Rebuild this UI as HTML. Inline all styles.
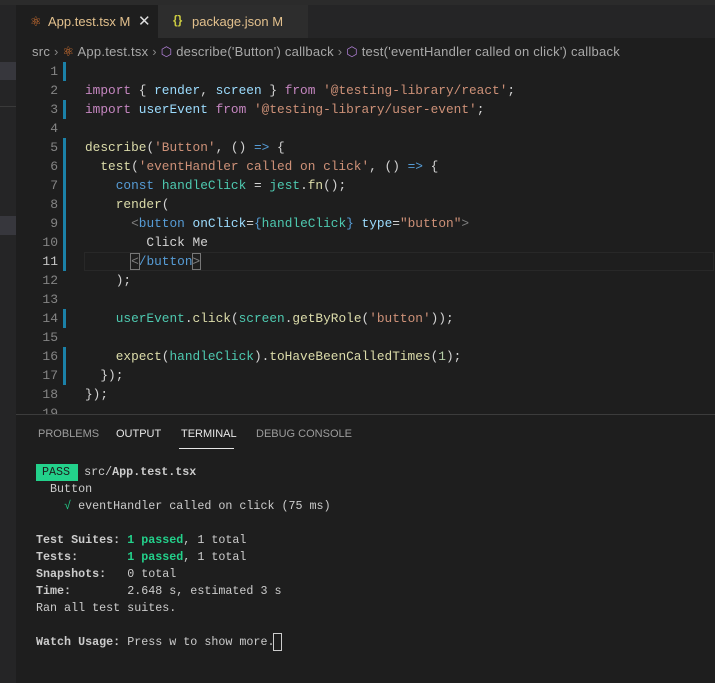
<!DOCTYPE html>
<html><head><style>
*{margin:0;padding:0;box-sizing:border-box}
body{width:715px;height:683px;background:#1e1e1e;overflow:hidden;position:relative;font-family:"Liberation Sans",sans-serif;}
.abs{position:absolute}
.code{font-family:"Liberation Mono",monospace;font-size:12.8px;white-space:pre;color:#d4d4d4;line-height:19px}
.ln{position:absolute;left:16px;width:42px;text-align:right;color:#858585;font-family:"Liberation Mono",monospace;font-size:13px;line-height:19px}
.k{color:#c586c0}.v{color:#9cdcfe}.s{color:#ce9178}.f{color:#dcdcaa}.b{color:#569cd6}.c{color:#4ec9b0}.g{color:#808080}
.term{font-family:"Liberation Mono",monospace;font-size:11.7px;white-space:pre;color:#cccccc;line-height:17px}
.bold{font-weight:bold}
.gr{color:#23d18b;font-weight:bold}
</style></head><body>
<div class="abs" style="left:0;top:0;width:715px;height:5px;background:#2b2b2b"></div>
<div class="abs" style="left:0;top:5px;width:715px;height:33px;background:#252526"></div>
<div class="abs" style="left:0;top:38px;width:16px;height:645px;background:#252526"></div>
<div class="abs" style="left:0;top:62px;width:16px;height:18px;background:#37373d"></div>
<div class="abs" style="left:0;top:216px;width:16px;height:19px;background:#37373d"></div>
<div class="abs" style="left:0;top:106px;width:16px;height:1px;background:#3a3a3a"></div>
<div class="abs" style="left:16px;top:5px;width:142px;height:33px;background:#1e1e1e"></div>
<div class="abs" style="left:158px;top:5px;width:150px;height:33px;background:#2d2d2d"></div>
<div class="abs" style="left:30px;top:14px;font-size:13px;color:#e37933">⚛</div>
<div class="abs" style="left:48px;top:14px;font-size:13px;color:#e2c08d">App.test.tsx <span style="color:#e2c08d">M</span></div>
<div class="abs" style="left:138px;top:12px;font-size:15px;color:#ddd">✕</div>
<div class="abs" style="left:173px;top:13px;font-size:12px;color:#cbcb41;font-weight:bold">{}</div>
<div class="abs" style="left:192px;top:14px;font-size:13px;color:#e2c08d">package.json <span>M</span></div>
<div class="abs" style="left:32px;top:44px;font-size:13px;letter-spacing:0.25px;color:#a9a9a9;white-space:pre">src <span style="color:#888">›</span> <span style="color:#e37933">⚛</span> App.test.tsx <span style="color:#888">›</span> <span style="color:#b180d7">⬡</span> describe('Button') callback <span style="color:#888">›</span> <span style="color:#b180d7">⬡</span> test('eventHandler called on click') callback</div>
<div class="abs" style="left:63px;top:62px;width:3px;height:19px;background:#1b81a8"></div>
<div class="abs" style="left:63px;top:100px;width:3px;height:19px;background:#1b81a8"></div>
<div class="abs" style="left:63px;top:138px;width:3px;height:133px;background:#1b81a8"></div>
<div class="abs" style="left:63px;top:309px;width:3px;height:19px;background:#1b81a8"></div>
<div class="abs" style="left:63px;top:347px;width:3px;height:38px;background:#1b81a8"></div>
<div class="abs" style="left:84px;top:252px;width:630px;height:19px;border:1px solid #282828"></div>
<div class="ln" style="top:62px">1<br>2<br>3<br>4<br>5<br>6<br>7<br>8<br>9<br>10<br><span style="color:#c6c6c6">11</span><br>12<br>13<br>14<br>15<br>16<br>17<br>18<br>19</div>
<div class="abs code" style="left:85px;top:62px">
<span class="k">import</span> { <span class="v">render</span>, <span class="v">screen</span> } <span class="k">from</span> <span class="s">'@testing-library/react'</span>;
<span class="k">import</span> <span class="v">userEvent</span> <span class="k">from</span> <span class="s">'@testing-library/user-event'</span>;

<span class="f">describe</span>(<span class="s">'Button'</span>, () <span class="b">=&gt;</span> {
  <span class="f">test</span>(<span class="s">'eventHandler called on click'</span>, () <span class="b">=&gt;</span> {
    <span class="b">const</span> <span class="c">handleClick</span> = <span class="c">jest</span>.<span class="f">fn</span>();
    <span class="f">render</span>(
      <span class="g">&lt;</span><span class="b">button</span> <span class="v">onClick</span>=<span class="b">{</span><span class="c">handleClick</span><span class="b">}</span> <span class="v">type</span>=<span class="s">"button"</span><span class="g">&gt;</span>
        Click Me
      <span class="g" style="outline:1px solid #777">&lt;</span><span class="b">/button</span><span class="g" style="outline:1px solid #777">&gt;</span>
    );

    <span class="c">userEvent</span>.<span class="f">click</span>(<span class="c">screen</span>.<span class="f">getByRole</span>(<span class="s">'button'</span>));

    <span class="f">expect</span>(<span class="c">handleClick</span>).<span class="f">toHaveBeenCalledTimes</span>(<span style="color:#b5cea8">1</span>);
  });
});</div>
<div class="abs" style="left:16px;top:414px;width:699px;height:269px;background:#1e1e1e;border-top:1px solid #3c3c3c"></div>
<div class="abs" style="left:38px;top:428px;font-size:11px;color:#9d9d9d">PROBLEMS</div>
<div class="abs" style="left:116px;top:428px;font-size:11px;color:#e7e7e7">OUTPUT</div>
<div class="abs" style="left:181px;top:428px;font-size:11px;color:#e7e7e7">TERMINAL</div>
<div class="abs" style="left:179px;top:448px;width:55px;height:1px;background:#e7e7e7"></div>
<div class="abs" style="left:256px;top:428px;font-size:11px;color:#9d9d9d">DEBUG CONSOLE</div>
<div class="abs" style="left:36px;top:464px;width:42px;height:17px;background:#23d18b"></div>
<div class="abs term" style="left:36px;top:464px"><span style="color:#1e1e1e;padding-left:6px">PASS</span>  src/<span class="bold">App.test.tsx</span>
  Button
    <span style="color:#23d18b">√</span> eventHandler called on click (75 ms)

<span class="bold">Test Suites: </span><span class="gr">1 passed</span>, 1 total
<span class="bold">Tests:       </span><span class="gr">1 passed</span>, 1 total
<span class="bold">Snapshots:   </span>0 total
<span class="bold">Time:        </span>2.648 s, estimated 3 s
Ran all test suites.

<span class="bold">Watch Usage: </span>Press w to show more.<span style="outline:1px solid #ccc;display:inline-block;width:7px;height:16px;vertical-align:middle"></span></div>
</body></html>
